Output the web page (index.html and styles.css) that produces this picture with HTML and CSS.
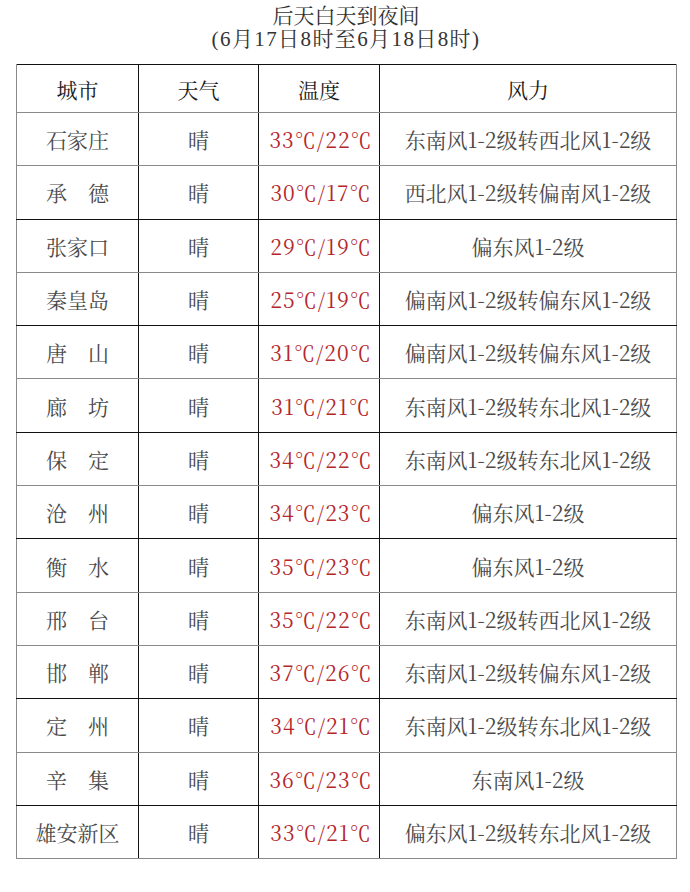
FILE: index.html
```html
<!DOCTYPE html>
<html lang="zh">
<head>
<meta charset="utf-8">
<title>后天白天到夜间</title>
<link rel="stylesheet" href="styles.css">
</head>
<body>
<div class="page">
  <header class="title">
    <div class="line">后天白天到夜间</div>
    <div class="line sub">(6月17日8时至6月18日8时)</div>
  </header>
  <table class="forecast">
    <colgroup>
      <col class="c-city"><col class="c-wx"><col class="c-temp"><col class="c-wind">
    </colgroup>
    <thead>
      <tr><th>城市</th><th>天气</th><th>温度</th><th>风力</th></tr>
    </thead>
    <tbody>
      <tr><td class="city">石家庄</td><td>晴</td><td class="temp">33℃/22℃</td><td>东南风1-2级转西北风1-2级</td></tr>
      <tr class="dk"><td class="city">承　德</td><td>晴</td><td class="temp">30℃/17℃</td><td>西北风1-2级转偏南风1-2级</td></tr>
      <tr><td class="city">张家口</td><td>晴</td><td class="temp">29℃/19℃</td><td>偏东风1-2级</td></tr>
      <tr class="dk"><td class="city">秦皇岛</td><td>晴</td><td class="temp">25℃/19℃</td><td>偏南风1-2级转偏东风1-2级</td></tr>
      <tr><td class="city">唐　山</td><td>晴</td><td class="temp">31℃/20℃</td><td>偏南风1-2级转偏东风1-2级</td></tr>
      <tr class="dk"><td class="city">廊　坊</td><td>晴</td><td class="temp">31℃/21℃</td><td>东南风1-2级转东北风1-2级</td></tr>
      <tr><td class="city">保　定</td><td>晴</td><td class="temp">34℃/22℃</td><td>东南风1-2级转东北风1-2级</td></tr>
      <tr class="dk"><td class="city">沧　州</td><td>晴</td><td class="temp">34℃/23℃</td><td>偏东风1-2级</td></tr>
      <tr><td class="city">衡　水</td><td>晴</td><td class="temp">35℃/23℃</td><td>偏东风1-2级</td></tr>
      <tr><td class="city">邢　台</td><td>晴</td><td class="temp">35℃/22℃</td><td>东南风1-2级转西北风1-2级</td></tr>
      <tr class="dk"><td class="city">邯　郸</td><td>晴</td><td class="temp">37℃/26℃</td><td>东南风1-2级转偏东风1-2级</td></tr>
      <tr><td class="city">定　州</td><td>晴</td><td class="temp">34℃/21℃</td><td>东南风1-2级转东北风1-2级</td></tr>
      <tr class="dk"><td class="city">辛　集</td><td>晴</td><td class="temp">36℃/23℃</td><td>东南风1-2级</td></tr>
      <tr><td class="city">雄安新区</td><td>晴</td><td class="temp">33℃/21℃</td><td>偏东风1-2级转东北风1-2级</td></tr>
    </tbody>
  </table>
</div>
</body>
</html>
```

FILE: styles.css
```css
html, body {
  margin: 0;
  padding: 0;
  background: #ffffff;
}

body {
  font-family: "Noto Serif CJK SC", "Liberation Serif", "Noto Sans CJK SC", serif;
  color: #4a4a4a;
}

.page {
  width: 690px;
  height: 892px;
  padding: 5px 14px 0 16px;
  box-sizing: border-box;
}

.title {
  text-align: center;
  font-family: "Liberation Serif", "Noto Serif CJK SC", "Noto Sans CJK SC", serif;
  font-size: 21px;
  line-height: 23px;
  color: #333333;
  margin-bottom: 13px;
}

.title .sub {
  letter-spacing: 1.4px;
}

.forecast {
  width: 660px;
  border-collapse: collapse;
  table-layout: fixed;
  border-left: 1px solid #8a8a8a;
  border-right: 1px solid #8a8a8a;
  border-top: 1px solid #111111;
}

.c-city { width: 122px; }
.c-wx { width: 120px; }
.c-temp { width: 121px; }
.c-wind { width: 297px; }

.forecast th,
.forecast td {
  padding: 0;
  text-align: center;
  vertical-align: middle;
  border-left: 1px solid #111111;
  border-bottom: 1px solid #8a8a8a;
  font-size: 21px;
  white-space: nowrap;
}

.forecast th:first-child,
.forecast td:first-child {
  border-left: 1px solid #8a8a8a;
}

.forecast th {
  height: 47px;
  font-weight: normal;
  color: #1a1a1a;
}

.forecast td {
  height: 52.3px;
  color: #4a4a4a;
}

.forecast tr.dk td {
  border-bottom-color: #111111;
}

.forecast td.temp {
  color: #b5262b;
  letter-spacing: 1px;
  padding-left: 4px;
}
```
